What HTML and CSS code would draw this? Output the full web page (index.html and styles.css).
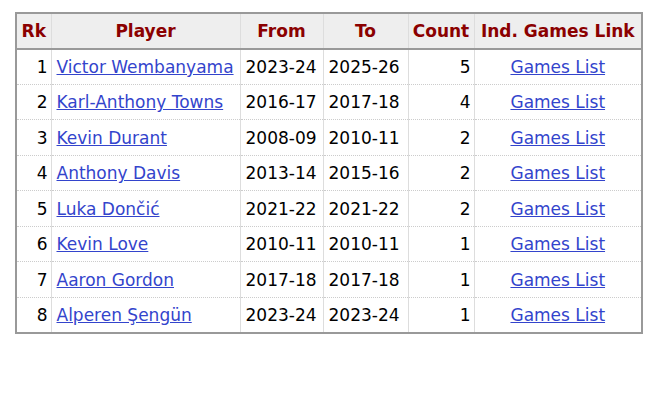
FILE: index.html
```html
<!DOCTYPE html>
<html>
<head>
<meta charset="utf-8">
<link rel="stylesheet" href="styles.css">
</head>
<body>
<div class="page">
<table class="stats">
<colgroup>
<col class="c-rk"><col class="c-player"><col class="c-from"><col class="c-to"><col class="c-count"><col class="c-link">
</colgroup>
<thead>
<tr><th>Rk</th><th>Player</th><th>From</th><th>To</th><th>Count</th><th>Ind. Games Link</th></tr>
</thead>
<tbody>
<tr><td class="num">1</td><td class="left"><a href="#">Victor Wembanyama</a></td><td>2023-24</td><td>2025-26</td><td class="num">5</td><td class="center"><a href="#">Games List</a></td></tr>
<tr><td class="num">2</td><td class="left"><a href="#">Karl-Anthony Towns</a></td><td>2016-17</td><td>2017-18</td><td class="num">4</td><td class="center"><a href="#">Games List</a></td></tr>
<tr><td class="num">3</td><td class="left"><a href="#">Kevin Durant</a></td><td>2008-09</td><td>2010-11</td><td class="num">2</td><td class="center"><a href="#">Games List</a></td></tr>
<tr><td class="num">4</td><td class="left"><a href="#">Anthony Davis</a></td><td>2013-14</td><td>2015-16</td><td class="num">2</td><td class="center"><a href="#">Games List</a></td></tr>
<tr><td class="num">5</td><td class="left"><a href="#">Luka Dončić</a></td><td>2021-22</td><td>2021-22</td><td class="num">2</td><td class="center"><a href="#">Games List</a></td></tr>
<tr><td class="num">6</td><td class="left"><a href="#">Kevin Love</a></td><td>2010-11</td><td>2010-11</td><td class="num">1</td><td class="center"><a href="#">Games List</a></td></tr>
<tr><td class="num">7</td><td class="left"><a href="#">Aaron Gordon</a></td><td>2017-18</td><td>2017-18</td><td class="num">1</td><td class="center"><a href="#">Games List</a></td></tr>
<tr><td class="num">8</td><td class="left"><a href="#">Alperen Şengün</a></td><td>2023-24</td><td>2023-24</td><td class="num">1</td><td class="center"><a href="#">Games List</a></td></tr>
</tbody>
</table>
</div>
</body>
</html>
```

FILE: styles.css
```css
html, body {
  margin: 0;
  padding: 0;
  background: #fff;
}
.page {
  padding: 12px 0 0 15px;
}
.stats {
  border-collapse: collapse;
  table-layout: fixed;
  width: 626px;
  font-family: "DejaVu Sans", Verdana, sans-serif;
  font-size: 17px;
  color: #000;
  border: 2px solid #999;
}
.c-rk { width: 35px; }
.c-player { width: 189px; }
.c-from { width: 83px; }
.c-to { width: 85px; }
.c-count { width: 66px; }
.c-link { width: 168px; }
.stats tr {
  height: 35.5px;
}
.stats th {
  background: #eee;
  color: #8b0000;
  font-weight: bold;
  padding: 1px 2px 0;
  border-left: 1px solid #ddd;
  border-right: 1px solid #ddd;
  border-bottom: 2px solid #999;
  text-align: center;
  white-space: nowrap;
}
.stats td {
  padding: 1px 5px 0;
  border-left: 1px solid #ddd;
  border-right: 1px solid #ddd;
  border-bottom: 1px dotted #ccc;
  white-space: nowrap;
}
.stats tbody tr:last-child td {
  border-bottom: 2px solid #999;
}
.stats td.num {
  text-align: right;
  padding-right: 3px;
}
.stats td.center {
  text-align: center;
}
.stats td.left {
  text-align: left;
}
.stats a {
  color: #3344cc;
  text-decoration: underline;
}
```
